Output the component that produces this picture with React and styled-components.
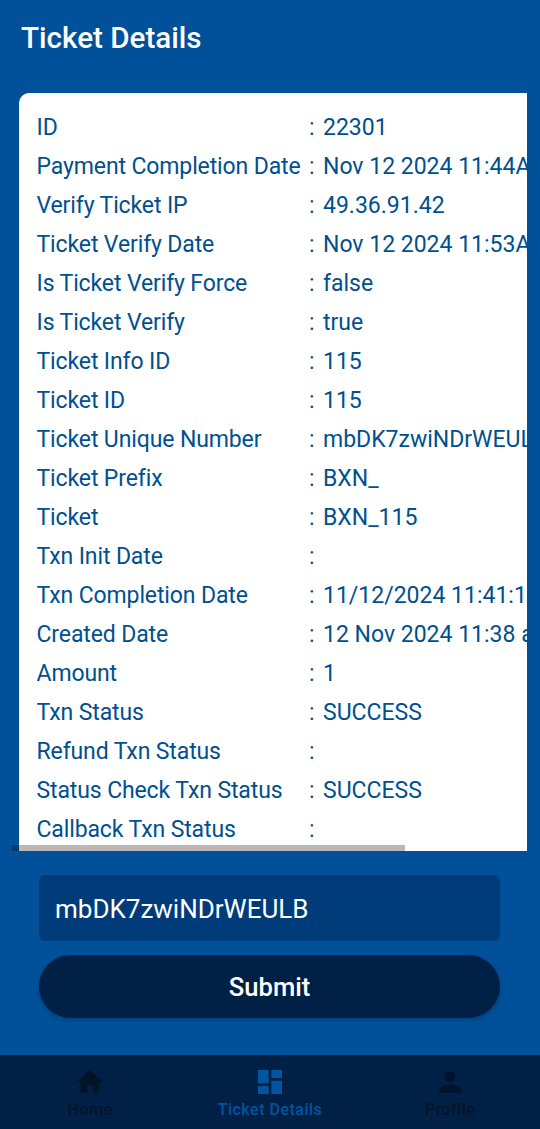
import React from 'react'
import styled, { createGlobalStyle } from 'styled-components'
import { MdHome, MdDashboard, MdPerson } from 'react-icons/md'

const GlobalStyle = createGlobalStyle`
  html, body {
    margin: 0;
    padding: 0;
    background: #00509a;
  }
  * {
    box-sizing: border-box;
  }
`

const Page = styled.div`
  width: 540px;
  height: 1129px;
  display: flex;
  flex-direction: column;
  background: #00509a;
  font-family: Roboto, "Liberation Sans", sans-serif;
  overflow: hidden;
`

const Header = styled.header`
  height: 93px;
  padding: 19px 0 0 21px;
  flex-shrink: 0;
`

const Title = styled.h1`
  margin: 0;
  color: #fff;
  font-size: 29.6px;
  line-height: 38px;
  font-weight: 500;
`

const Card = styled.section`
  position: relative;
  width: 508px;
  height: 758px;
  margin-left: 19px;
  padding: 15px 0 0 17.5px;
  background: #fff;
  border-radius: 10px 0 0 0;
  flex-shrink: 0;
`

const Rows = styled.div`
  height: 743px;
  overflow: hidden;
`

const Row = styled.div`
  display: flex;
  height: 39px;
  align-items: center;
  color: #00508f;
  font-size: 23px;
  white-space: nowrap;
`

const Label = styled.span`
  width: 272.5px;
  flex-shrink: 0;
  letter-spacing: -0.12px;
`

const Colon = styled.span`
  width: 14px;
  flex-shrink: 0;
`

const ScrollBar = styled.div`
  position: absolute;
  left: 0;
  bottom: 0;
  width: 386px;
  height: 6px;
  background: #b9b9b9;

  &::before {
    content: '';
    position: absolute;
    left: -7px;
    top: 0;
    width: 7px;
    height: 6px;
    background: #0a3a66;
  }
`

const Form = styled.form`
  display: flex;
  flex-direction: column;
  gap: 14px;
  padding: 24px 40px 0 39px;
  flex: 1;
`

const Field = styled.div`
  height: 66px;
  padding: 2px 0 0 16px;
  display: flex;
  align-items: center;
  background: #003b7a;
  border-radius: 6px;
  color: #fff;
  font-size: 26px;
`

const SubmitButton = styled.button`
  height: 63px;
  border: none;
  border-radius: 32px;
  background: #002046;
  color: #fff;
  font-family: inherit;
  font-size: 25.6px;
  font-weight: 500;
  box-shadow: 0 2px 4px rgba(0, 0, 0, 0.2);
`

const Nav = styled.nav`
  height: 74px;
  display: grid;
  grid-template-columns: repeat(3, 1fr);
  background: #002046;
  flex-shrink: 0;
`

const NavItem = styled.div`
  display: flex;
  flex-direction: column;
  align-items: center;
  padding-top: 11px;
  color: ${props => (props.$active ? '#0054a0' : '#001429')};
  font-size: 16px;
  font-weight: 500;
  letter-spacing: 0.5px;
  line-height: 20px;

  svg {
    display: block;
    margin-bottom: 2px;
  }
`

const details = [
  ['ID', '22301'],
  ['Payment Completion Date', 'Nov 12 2024 11:44AM'],
  ['Verify Ticket IP', '49.36.91.42'],
  ['Ticket Verify Date', 'Nov 12 2024 11:53AM'],
  ['Is Ticket Verify Force', 'false'],
  ['Is Ticket Verify', 'true'],
  ['Ticket Info ID', '115'],
  ['Ticket ID', '115'],
  ['Ticket Unique Number', 'mbDK7zwiNDrWEULB'],
  ['Ticket Prefix', 'BXN_'],
  ['Ticket', 'BXN_115'],
  ['Txn Init Date', ''],
  ['Txn Completion Date', '11/12/2024 11:41:12'],
  ['Created Date', '12 Nov 2024 11:38 am'],
  ['Amount', '1'],
  ['Txn Status', 'SUCCESS'],
  ['Refund Txn Status', ''],
  ['Status Check Txn Status', 'SUCCESS'],
  ['Callback Txn Status', ''],
]

export default function App() {
  return (
    <Page>
      <GlobalStyle />
      <Header>
        <Title>Ticket Details</Title>
      </Header>
      <Card>
        <Rows>
          {details.map(([label, value]) => (
            <Row key={label}>
              <Label>{label}</Label>
              <Colon>:</Colon>
              <span>{value}</span>
            </Row>
          ))}
        </Rows>
        <ScrollBar />
      </Card>
      <Form>
        <Field>mbDK7zwiNDrWEULB</Field>
        <SubmitButton type="button">Submit</SubmitButton>
      </Form>
      <Nav>
        <NavItem>
          <MdHome size={32} />
          Home
        </NavItem>
        <NavItem $active>
          <MdDashboard size={32} />
          Ticket Details
        </NavItem>
        <NavItem>
          <MdPerson size={32} />
          Profile
        </NavItem>
      </Nav>
    </Page>
  )
}
